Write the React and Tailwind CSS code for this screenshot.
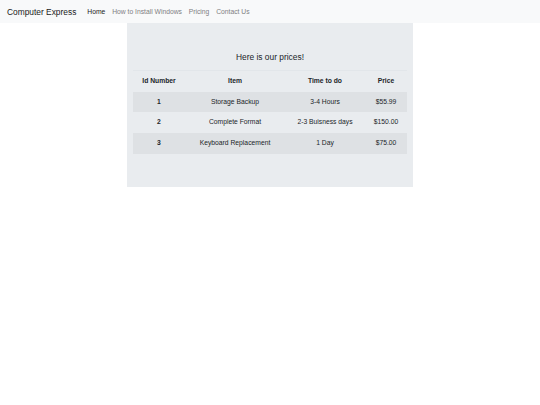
export default function App() {
  const rows = [
    ["1", "Storage Backup", "3-4 Hours", "$55.99"],
    ["2", "Complete Format", "2-3 Buisness days", "$150.00"],
    ["3", "Keyboard Replacement", "1 Day", "$75.00"],
  ];
  const font = { fontFamily: '"Liberation Sans", Arial, sans-serif' };
  return (
    <div className="w-[540px] min-h-[405px] bg-white text-[#212529]" style={font}>
      <nav className="h-[23px] bg-[#f8f9fa] flex items-center pl-[7px] pt-[1px]">
        <span className="text-[8.4px] leading-none text-[#1a1a1a]">Computer Express</span>
        <div className="flex items-center ml-[7.6px] text-[6.75px] leading-none">
          <span className="px-[3.4px] text-[#1a1a1a]">Home</span>
          <span className="px-[3.4px] text-[#7f8082]">How to Install Windows</span>
          <span className="px-[3.4px] text-[#7f8082]">Pricing</span>
          <span className="px-[3.4px] text-[#7f8082]">Contact Us</span>
        </div>
      </nav>
      <div className="ml-[127px] w-[286px] h-[164px] bg-[#e9ecef] px-[6px] pt-[29px]">
        <div className="h-[10px] text-center text-[8.4px] leading-[10px] text-[#212529]">
          Here is our prices!
        </div>
        <div className="mt-[8px] border-t border-[#dee2e6]/60 text-[6.75px] leading-none">
          <div className="flex h-[20.5px] items-center font-bold">
            <div className="w-[52px] text-center">Id Number</div>
            <div className="w-[100px] text-center">Item</div>
            <div className="w-[80px] text-center">Time to do</div>
            <div className="flex-1 text-center">Price</div>
          </div>
          {rows.map((r, i) => (
            <div
              key={i}
              className={`flex h-[20.8px] items-center ${i % 2 === 0 ? "bg-[#dee1e4]" : ""}`}
            >
              <div className="w-[52px] text-center font-bold">{r[0]}</div>
              <div className="w-[100px] text-center">{r[1]}</div>
              <div className="w-[80px] text-center">{r[2]}</div>
              <div className="flex-1 text-center">{r[3]}</div>
            </div>
          ))}
        </div>
      </div>
    </div>
  );
}
